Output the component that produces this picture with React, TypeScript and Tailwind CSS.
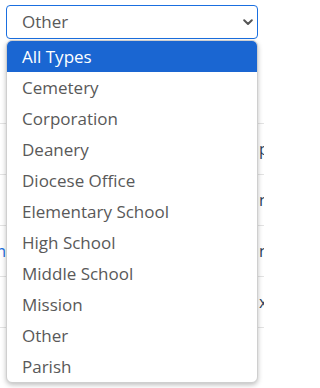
const OPTIONS = [
  "All Types",
  "Cemetery",
  "Corporation",
  "Deanery",
  "Diocese Office",
  "Elementary School",
  "High School",
  "Middle School",
  "Mission",
  "Other",
  "Parish",
];

// rows of the table that sits behind the open list
const ROWS = [
  { left: "", right: "pending" },
  { left: "", right: "name" },
  { left: "Saint John", right: "name" },
  { left: "", right: "x" },
  { left: "", right: "" },
];

export default function App() {
  return (
    <div className="relative w-[264px] h-[388px] overflow-hidden bg-white font-['Open_Sans',sans-serif]">
      <div className="px-[6px] pt-[5px]">
        <div className="h-[34px] border border-[#1a6fe0] rounded-[4px] flex items-center pl-[15px] pr-[4px] text-[17px] text-[#595959]">
          <span className="flex-1">Other</span>
          <svg width="10" height="7" viewBox="0 0 10 7" className="shrink-0">
            <polyline points="1.2,1.3 5,5 8.8,1.3" fill="none" stroke="#555" strokeWidth="2" strokeLinecap="round" strokeLinejoin="round" />
          </svg>
        </div>
      </div>

      <div className="mt-[84px] text-[16px]">
        {ROWS.map((r, i) => (
          <div key={i} className="h-[51px] border-t border-[#e3e3e3] flex items-center">
            <div className="w-[6px] shrink-0 flex justify-end overflow-visible">
              <span className="whitespace-nowrap text-[#1a6fe0]">{r.left}</span>
            </div>
            <div className="flex-1" />
            <div className="w-[5px] shrink-0 overflow-visible">
              <span className="whitespace-nowrap text-[#2b3f5c]">{r.right}</span>
            </div>
          </div>
        ))}
      </div>

      <div className="absolute top-[40px] left-[6px] w-[252px] bg-white border border-[#cfcfcf] rounded-[6px] overflow-hidden shadow-[0_2px_5px_rgba(0,0,0,0.25)]">
        {OPTIONS.map((o, i) => (
          <div
            key={o}
            className={
              i === 0
                ? "h-[31px] flex items-center pl-[15px] text-[17px] bg-[#1a66d2] text-white"
                : "h-[31px] flex items-center pl-[15px] text-[17px] text-[#595959]"
            }
          >
            {o}
          </div>
        ))}
      </div>
    </div>
  );
}
